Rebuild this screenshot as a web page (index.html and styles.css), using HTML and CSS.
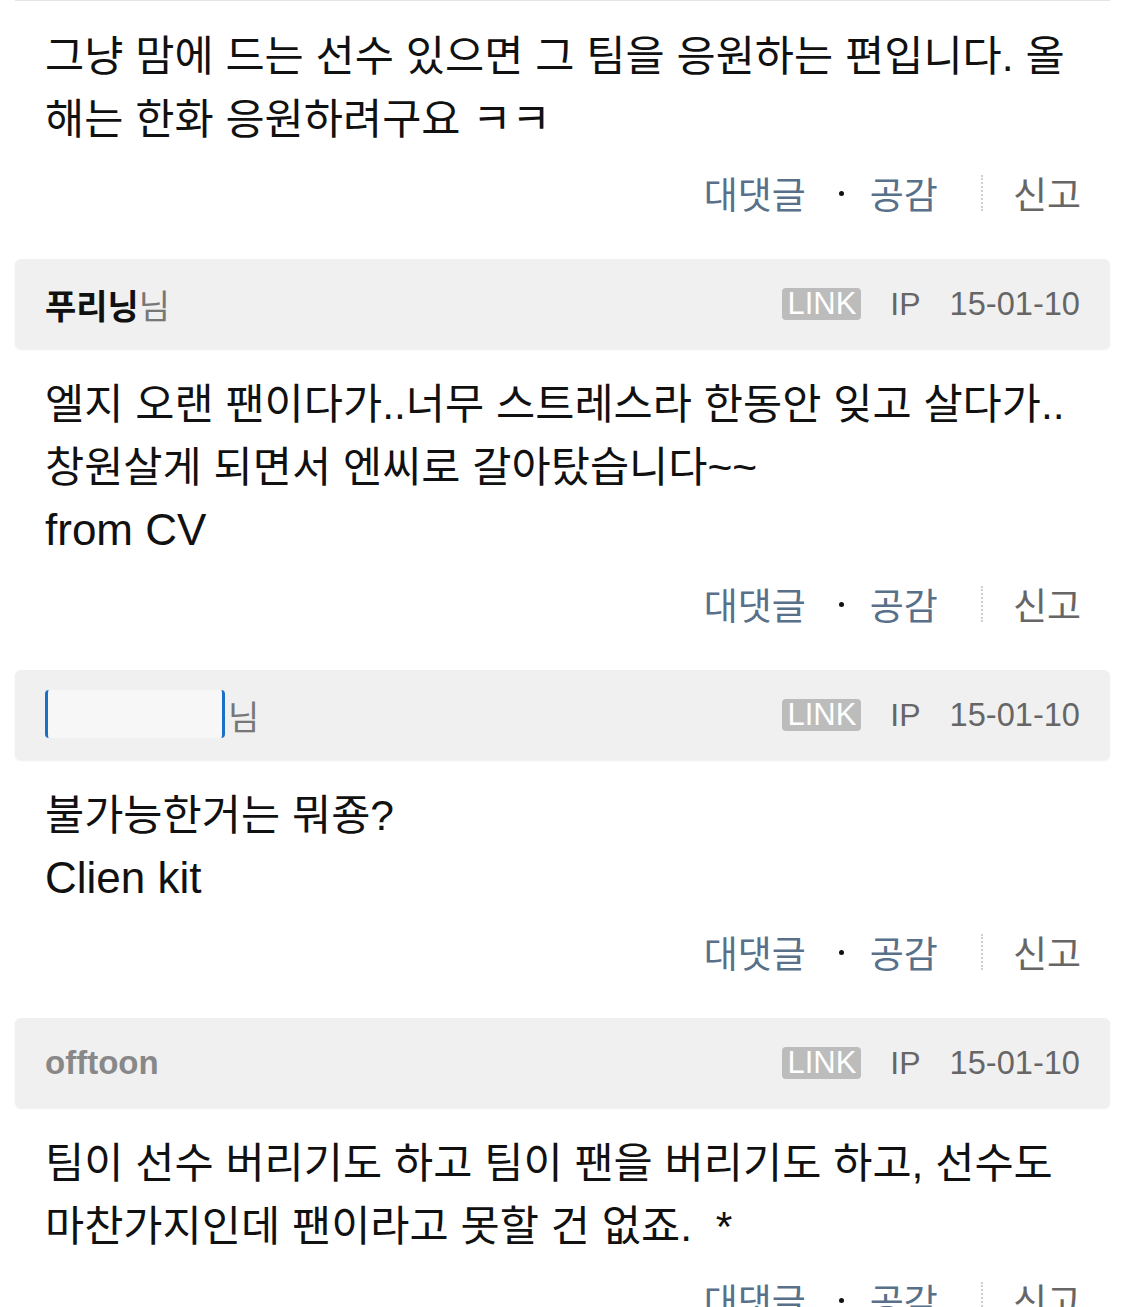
FILE: index.html
```html
<!DOCTYPE html>
<html lang="ko">
<head>
<meta charset="utf-8">
<link rel="stylesheet" href="styles.css">
</head>
<body>
<div class="list">
  <div class="topline"></div>

  <div class="comment">
    <div class="body">그냥 맘에 드는 선수 있으면 그 팀을 응원하는 편입니다. 올해는 한화 응원하려구요 ㅋㅋ</div>
    <div class="actions">
      <span class="act">대댓글</span><span class="dot"></span><span class="act">공감</span><span class="sep"></span><span class="report">신고</span>
    </div>
  </div>

  <div class="head">
    <div class="nick"><b>푸리닝</b><span class="nim">님</span></div>
    <div class="meta"><span class="link">LINK</span><span>IP</span><span class="date">15-01-10</span></div>
  </div>
  <div class="comment">
    <div class="body">엘지 오랜 팬이다가..너무 스트레스라 한동안 잊고 살다가.. 창원살게 되면서 엔씨로 갈아탔습니다~~<br><span class="en">from CV</span></div>
    <div class="actions">
      <span class="act">대댓글</span><span class="dot"></span><span class="act">공감</span><span class="sep"></span><span class="report">신고</span>
    </div>
  </div>

  <div class="head">
    <div class="nick"><span class="nickimg"></span><span class="nim">님</span></div>
    <div class="meta"><span class="link">LINK</span><span>IP</span><span class="date">15-01-10</span></div>
  </div>
  <div class="comment">
    <div class="body">불가능한거는 뭐죵?<br><span class="en">Clien kit</span></div>
    <div class="actions">
      <span class="act">대댓글</span><span class="dot"></span><span class="act">공감</span><span class="sep"></span><span class="report">신고</span>
    </div>
  </div>

  <div class="head">
    <div class="nick"><b class="gray">offtoon</b></div>
    <div class="meta"><span class="link">LINK</span><span>IP</span><span class="date">15-01-10</span></div>
  </div>
  <div class="comment">
    <div class="body">팀이 선수 버리기도 하고 팀이 팬을 버리기도 하고, 선수도 마찬가지인데 팬이라고 못할 건 없죠.&nbsp; *</div>
    <div class="actions">
      <span class="act">대댓글</span><span class="dot"></span><span class="act">공감</span><span class="sep"></span><span class="report">신고</span>
    </div>
  </div>
</div>
</body>
</html>
```
FILE: styles.css
```css
html, body {
  margin: 0;
  padding: 0;
  background: #fff;
}
body {
  font-family: "Liberation Sans", "Noto Sans CJK KR", sans-serif;
  color: #111;
  overflow: hidden;
}
.list {
  padding: 0 15px;
}
.topline {
  height: 1px;
  background: #e4e4e4;
}
.comment {
  padding: 24px 0 0;
}
.body {
  padding: 0 30px;
  font-size: 42.6px;
  line-height: 63px;
  color: #111;
}
.body .en {
  font-size: 44px;
  line-height: 1;
}
.actions {
  display: flex;
  justify-content: flex-end;
  align-items: center;
  height: 50px;
  margin: 17px 0 41px;
  padding-right: 29px;
  font-size: 37px;
}
.act {
  color: #587089;
}
.dot {
  width: 5px;
  height: 5px;
  border-radius: 50%;
  background: #111;
  margin: 0 26px 0 33px;
}
.sep {
  width: 0;
  height: 36px;
  border-left: 2px dotted #cfcfcf;
  margin: 0 30px 0 43px;
}
.report {
  color: #666;
}
.head {
  display: flex;
  align-items: center;
  justify-content: space-between;
  height: 90px;
  padding: 0 30px;
  background: #f0f0f0;
  border-radius: 6px;
  box-shadow: 0 1px 2px rgba(0, 0, 0, 0.07);
}
.nick {
  display: flex;
  align-items: center;
  font-size: 34px;
}
.nick b {
  font-weight: 700;
  color: #111;
}
.nick b.gray {
  color: #888;
  font-size: 33px;
}
.nim {
  color: #777;
}
.nickimg {
  width: 174px;
  height: 48px;
  background: #f7f7f7;
  border-left: 3px solid #1b6fc6;
  border-right: 3px solid #1b6fc6;
  border-radius: 4px;
  margin-right: 3px;
  margin-top: -2px;
}
.meta {
  display: flex;
  align-items: center;
  gap: 29px;
  font-size: 32px;
  color: #666;
}
.meta .date {
  font-size: 32.6px;
}
.link {
  background: #bcbcbc;
  color: #fff;
  font-size: 31px;
  line-height: 32px;
  height: 32px;
  padding: 0 5px;
  border-radius: 4px;
}
```
